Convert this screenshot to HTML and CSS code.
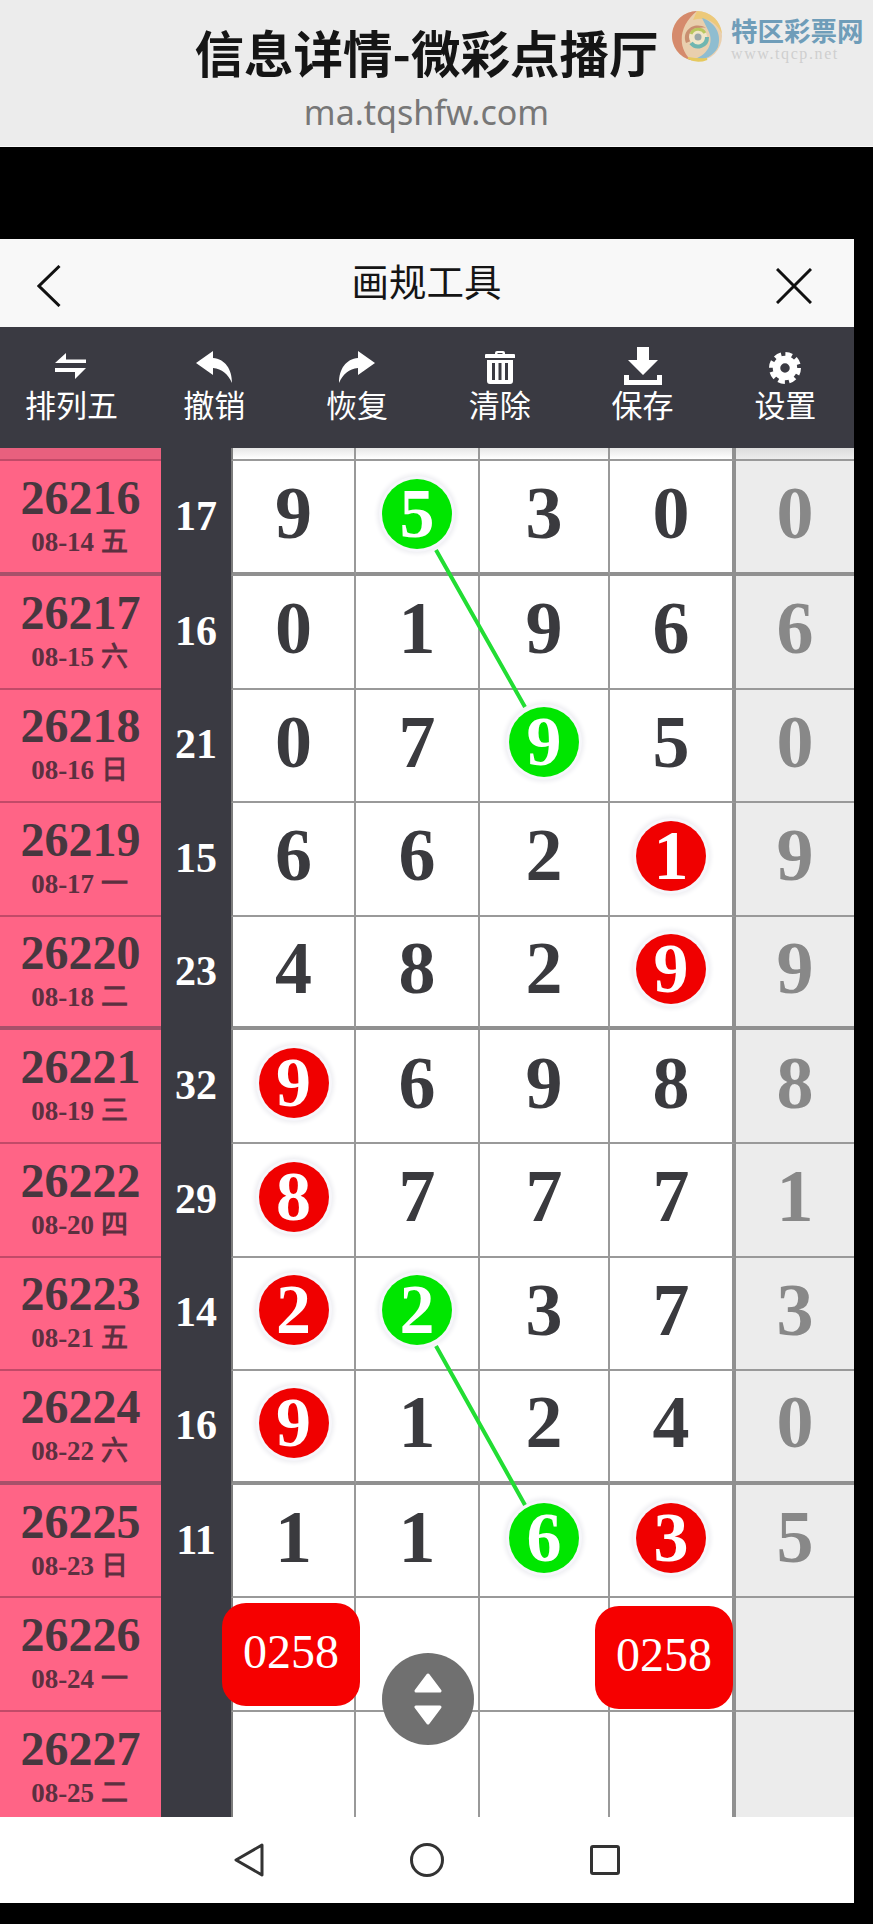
FILE: index.html
```html
<!DOCTYPE html>
<html lang="zh-CN">
<head>
    <meta charset="UTF-8">
    <meta name="viewport" content="width=device-width, initial-scale=1.0">
    <title>信息详情-微彩点播厅</title>
    <link rel="stylesheet" href="styles.css">
</head>
<body>

    <header class="site-header">
        <h1 class="site-title">信息详情-微彩点播厅</h1>
        <p class="site-url">ma.tqshfw.com</p>
        <div class="watermark">
            <svg class="watermark-logo" viewBox="0 0 52 52" width="52" height="52" fill="none">
                <circle cx="26" cy="26" r="25" fill="#e9cfae"/>
                <path d="M26 1 A25 25 0 0 0 21 50.500 C7 40 6 17 26 1 Z" fill="#d58a6c"/>
                <path d="M26 1 A25 25 0 0 1 51 24 C45 11 34 6 22 10 Z" fill="#ecc97a"/>
                <path d="M31 8 C44 12 51 24 47 37 C42 47 32 51 21 50 C36 46 44 33 37 20 Z" fill="#8fbdd0"/>
                <path d="M17 48 Q26 53 36 49 Q28 50 17 48 Z" fill="#e6c95e" stroke="#e6c95e" stroke-width="2"/>
                <path d="M15 33 C10 20 24 11 35 18 C27 16 19 21 20 31 Z" fill="#c98f70"/>
                <circle cx="27" cy="27" r="9" fill="#f0e6c8"/>
                <path d="M36 27 A9 9 0 0 1 20 33" stroke="#6fb6b0" stroke-width="4"/>
                <path d="M20 24 A8 8 0 0 1 34 23" stroke="#b9c75e" stroke-width="3"/>
                <circle cx="27" cy="27" r="3.500" fill="#9aa8a8"/>
            </svg>
            <div class="watermark-text">
                <div class="watermark-name">特区彩票网</div>
                <div class="watermark-site">www.tqcp.net</div>
            </div>
        </div>
    </header>

    <div class="black-gap"></div>

    <main class="app">
        <div class="title-bar">
            <svg class="title-icon" viewBox="0 0 24 42" width="24" height="42" fill="none">
                <path d="M22.5 1 L2 21 L22.5 41" stroke="#111" stroke-width="3"/>
            </svg>
            <div class="title-text">画规工具</div>
            <svg class="title-icon" viewBox="0 0 36 36" width="36" height="36" fill="none">
                <path d="M1 1 L35 35 M35 1 L1 35" stroke="#111" stroke-width="3"/>
            </svg>
        </div>

        <nav class="toolbar">
            <div class="tool">
                <svg class="tool-icon" viewBox="0 0 32 36" width="32" height="36" fill="#fff">
                    <path d="M11 5 L0 15 H31 V11.5 H11 Z"/>
                    <path d="M0 20 H31 L20 31 V24 H0 Z"/>
                </svg>
                <span>排列五</span>
            </div>
            <div class="tool">
                <svg class="tool-icon" viewBox="0 0 36 36" width="36" height="36" fill="#fff">
                    <path d="M0 15 L17 3 V10 C29 11 36 21 36 35 C32 26 26 21 17 20 V27 Z"/>
                </svg>
                <span>撤销</span>
            </div>
            <div class="tool">
                <svg class="tool-icon" viewBox="0 0 36 36" width="36" height="36" fill="#fff">
                    <path d="M36 15 L19 3 V10 C7 11 0 21 0 35 C4 26 10 21 19 20 V27 Z"/>
                </svg>
                <span>恢复</span>
            </div>
            <div class="tool">
                <svg class="tool-icon" viewBox="0 0 32 36" width="32" height="36" fill="#fff">
                    <path d="M11 5 Q11 3 13 3 H19 Q21 3 21 5 V6 H30 Q31 6 31 7 V10 H1 V7 Q1 6 2 6 H11 Z M13.500 5 V6 H18.500 V5 Z"/>
                    <path fill-rule="evenodd" d="M3 12 H29 V33 Q29 36 26 36 H6 Q3 36 3 33 Z M8 15 V32 H11 V15 Z M14.500 15 V32 H17.500 V15 Z M21 15 V32 H24 V15 Z"/>
                </svg>
                <span>清除</span>
            </div>
            <div class="tool">
                <svg class="tool-icon" viewBox="0 0 40 38" width="40" height="38" fill="#fff">
                    <path d="M14 0 H26 V13 H35 L20 28 L5 13 H14 Z"/>
                    <path d="M1 28 H6 V33 H34 V28 H39 V38 H1 Z"/>
                </svg>
                <span>保存</span>
            </div>
            <div class="tool">
                <svg class="tool-icon" viewBox="0 0 36 36" width="36" height="36" fill="none" stroke="#fff">
                    <circle cx="18" cy="20" r="8.500" stroke-width="7.500"/>
                    <circle cx="18" cy="20" r="13.500" stroke-width="5" stroke-dasharray="6.500 4.100"/>
                </svg>
                <span>设置</span>
            </div>
        </nav>

        <section class="board">
            <div class="row row-cut">
                <div class="date"></div><div class="sum"></div>
                <div class="cell"></div><div class="cell"></div><div class="cell"></div><div class="cell"></div>
                <div class="tail"></div>
            </div>

            <div class="row row-thick row-first">
                <div class="date"><b>26216</b><small>08-14 五</small></div><div class="sum">17</div>
                <div class="cell">9</div><div class="cell"><span class="ball ball-green">5</span></div><div class="cell">3</div><div class="cell">0</div>
                <div class="tail">0</div>
            </div>
            <div class="row">
                <div class="date"><b>26217</b><small>08-15 六</small></div><div class="sum">16</div>
                <div class="cell">0</div><div class="cell">1</div><div class="cell">9</div><div class="cell">6</div>
                <div class="tail">6</div>
            </div>
            <div class="row">
                <div class="date"><b>26218</b><small>08-16 日</small></div><div class="sum">21</div>
                <div class="cell">0</div><div class="cell">7</div><div class="cell"><span class="ball ball-green">9</span></div><div class="cell">5</div>
                <div class="tail">0</div>
            </div>
            <div class="row">
                <div class="date"><b>26219</b><small>08-17 一</small></div><div class="sum">15</div>
                <div class="cell">6</div><div class="cell">6</div><div class="cell">2</div><div class="cell"><span class="ball ball-red">1</span></div>
                <div class="tail">9</div>
            </div>
            <div class="row row-thick">
                <div class="date"><b>26220</b><small>08-18 二</small></div><div class="sum">23</div>
                <div class="cell">4</div><div class="cell">8</div><div class="cell">2</div><div class="cell"><span class="ball ball-red">9</span></div>
                <div class="tail">9</div>
            </div>
            <div class="row">
                <div class="date"><b>26221</b><small>08-19 三</small></div><div class="sum">32</div>
                <div class="cell"><span class="ball ball-red">9</span></div><div class="cell">6</div><div class="cell">9</div><div class="cell">8</div>
                <div class="tail">8</div>
            </div>
            <div class="row">
                <div class="date"><b>26222</b><small>08-20 四</small></div><div class="sum">29</div>
                <div class="cell"><span class="ball ball-red">8</span></div><div class="cell">7</div><div class="cell">7</div><div class="cell">7</div>
                <div class="tail">1</div>
            </div>
            <div class="row">
                <div class="date"><b>26223</b><small>08-21 五</small></div><div class="sum">14</div>
                <div class="cell"><span class="ball ball-red">2</span></div><div class="cell"><span class="ball ball-green">2</span></div><div class="cell">3</div><div class="cell">7</div>
                <div class="tail">3</div>
            </div>
            <div class="row row-thick">
                <div class="date"><b>26224</b><small>08-22 六</small></div><div class="sum">16</div>
                <div class="cell"><span class="ball ball-red">9</span></div><div class="cell">1</div><div class="cell">2</div><div class="cell">4</div>
                <div class="tail">0</div>
            </div>
            <div class="row">
                <div class="date"><b>26225</b><small>08-23 日</small></div><div class="sum">11</div>
                <div class="cell">1</div><div class="cell">1</div><div class="cell"><span class="ball ball-green">6</span></div><div class="cell"><span class="ball ball-red">3</span></div>
                <div class="tail">5</div>
            </div>
            <div class="row">
                <div class="date"><b>26226</b><small>08-24 一</small></div><div class="sum"></div>
                <div class="cell"></div><div class="cell"></div><div class="cell"></div><div class="cell"></div>
                <div class="tail"></div>
            </div>
            <div class="row">
                <div class="date"><b>26227</b><small>08-25 二</small></div><div class="sum"></div>
                <div class="cell"></div><div class="cell"></div><div class="cell"></div><div class="cell"></div>
                <div class="tail"></div>
            </div>

            <svg class="links" viewBox="0 0 854 1369" fill="none">
                <path d="M436 102 L525 259 M436 898 L525 1057" stroke="#22dd33" stroke-width="4"/>
            </svg>

            <div class="pick pick-left">0258</div>
            <div class="pick pick-right">0258</div>

            <div class="scroll-btn">
                <svg viewBox="0 0 28 52" width="28" height="52" fill="#fff" stroke="#fff" stroke-width="3" stroke-linejoin="round">
                    <path d="M14 2 L26 18 H2 Z"/>
                    <path d="M2 34 H26 L14 50 Z"/>
                </svg>
            </div>
        </section>

        <footer class="phone-nav">
            <svg viewBox="0 0 30 34" width="30" height="34" fill="none" stroke="#333" stroke-width="3" stroke-linejoin="round">
                <path d="M28 2 L2 17 L28 32 Z"/>
            </svg>
            <svg viewBox="0 0 34 34" width="34" height="34" fill="none" stroke="#333" stroke-width="3">
                <circle cx="17" cy="17" r="15.500"/>
            </svg>
            <svg viewBox="0 0 30 30" width="30" height="30" fill="none" stroke="#333" stroke-width="3" stroke-linejoin="round">
                <rect x="1.500" y="1.500" width="27" height="27" rx="1.500"/>
            </svg>
        </footer>
    </main>

</body>
</html>
```

FILE: styles.css
```css
* {
    box-sizing: border-box;
}

html,
body {
    margin: 0;
    padding: 0;
    background: #000;
}

body {
    width: 873px;
    height: 1924px;
    overflow: hidden;
    font-family: "Noto Sans CJK SC", sans-serif;
}

.site-header {
    position: relative;
    height: 147px;
    padding: 21px 20px 0 0;
    display: flex;
    flex-direction: column;
    align-items: center;
    background: #ececec;
    border-bottom: 1px solid #fafafa;
}

.site-title {
    margin: 0;
    font-size: 49.5px;
    line-height: 62px;
    font-weight: 700;
    color: #151515;
}

.site-url {
    margin: 7px 0 0;
    font-family: "Noto Sans", sans-serif;
    font-size: 34px;
    line-height: 44px;
    color: #777;
}

.watermark {
    position: absolute;
    top: 10px;
    left: 671px;
    display: flex;
    gap: 8px;
}

.watermark-text {
    padding-top: 5px;
    width: 135px;
}

.watermark-name {
    font-size: 26.5px;
    line-height: 30px;
    font-weight: 700;
    color: #6f9db9;
    white-space: nowrap;
}

.watermark-site {
    font-family: "Liberation Serif", serif;
    font-size: 16px;
    line-height: 18px;
    letter-spacing: 1.6px;
    color: #cfcfcf;
    white-space: nowrap;
}

.black-gap {
    height: 92px;
}

.app {
    width: 854px;
    height: 1664px;
}

.title-bar {
    height: 88px;
    padding: 0 42px 0 37px;
    display: flex;
    align-items: center;
    justify-content: space-between;
    background: #f8f8f8;
}

.title-text {
    margin: -6px 0 0 16px;
    font-size: 37.5px;
    line-height: 50px;
    color: #151515;
}

.title-icon {
    margin-top: 5px;
}

.toolbar {
    height: 121px;
    padding-top: 20px;
    display: grid;
    grid-template-columns: repeat(6, 142.8px);
    background: #3a3a42;
    color: #fff;
}

.tool {
    display: flex;
    flex-direction: column;
    align-items: center;
    font-size: 31px;
    line-height: 38px;
}

.tool-icon {
    height: 38px;
}

.board {
    position: relative;
    height: 1369px;
    overflow: hidden;
    background: #fff;
    font-family: "Liberation Serif", serif;
    font-weight: 700;
}

.row {
    height: 113.6px;
    display: grid;
    grid-template-columns: 161px 70px 125px 124px 130px 126px 118px;
}

.row-cut {
    height: 13px;
}

.row-first {
    height: 115px;
}

.row > * {
    display: flex;
    align-items: center;
    justify-content: center;
    border-bottom: 2px solid #999;
}

.row-thick > * {
    border-bottom-width: 4px;
    border-bottom-color: #909090;
}

.date {
    flex-direction: column;
    padding-bottom: 3px;
    background: #ff6486;
    border-bottom-color: #c24a68 !important;
    color: #47373f;
}

.row-thick .date {
    border-bottom-color: #a8506a !important;
}

.date b {
    font-size: 48px;
    line-height: 50px;
}

.date small {
    margin-top: 3px;
    padding-right: 2px;
    font-size: 27px;
    line-height: 32px;
    color: #5c3040;
}

.sum {
    padding-bottom: 2px;
    background: #3a3a42;
    border-bottom-color: #3a3a42 !important;
    font-size: 42px;
    color: #fff;
}

.cell {
    padding-bottom: 6px;
    border-right: 2px solid #999;
    font-size: 74px;
    color: #3a3a3e;
}

.cell:nth-child(3) {
    border-left: 2px solid #7c7c7c;
}

.cell:nth-child(6) {
    border-right: 4px solid #909090;
}

.tail {
    padding-bottom: 6px;
    background: #ececec;
    font-size: 74px;
    color: #888;
}

.row-cut .cell {
    padding: 0;
    background: linear-gradient(#e6e6e6, #fff);
}

.row-cut .tail {
    padding: 0;
    background: linear-gradient(#dcdcdc, #ececec);
}

.row-cut .date {
    padding: 0;
    background: #e8607e;
}

.ball {
    width: 70px;
    height: 70px;
    border-radius: 50%;
    display: flex;
    align-items: center;
    justify-content: center;
    box-shadow: 0 0 0 3px #f6f6fa, 0 0 4px 5px #eeeef2;
    font-size: 70px;
    line-height: 70px;
    color: #fff;
}

.ball-green {
    background: #00e600;
}

.ball-red {
    background: #f00000;
}

.links {
    position: absolute;
    top: 0;
    left: 0;
    width: 854px;
    height: 1369px;
}

.pick {
    position: absolute;
    width: 138px;
    height: 103px;
    display: flex;
    align-items: center;
    justify-content: center;
    padding-bottom: 6px;
    border-radius: 24px;
    background: #f60000;
    font-size: 48px;
    font-weight: 400;
    color: #fff;
}

.pick-left {
    top: 1155px;
    left: 222px;
}

.pick-right {
    top: 1158px;
    left: 595px;
}

.scroll-btn {
    position: absolute;
    top: 1205px;
    left: 382px;
    width: 92px;
    height: 92px;
    border-radius: 50%;
    display: flex;
    align-items: center;
    justify-content: center;
    background: #707070;
}

.phone-nav {
    height: 86px;
    padding: 0 234px 0 234px;
    display: flex;
    align-items: center;
    justify-content: space-between;
    background: #fff;
}
```
